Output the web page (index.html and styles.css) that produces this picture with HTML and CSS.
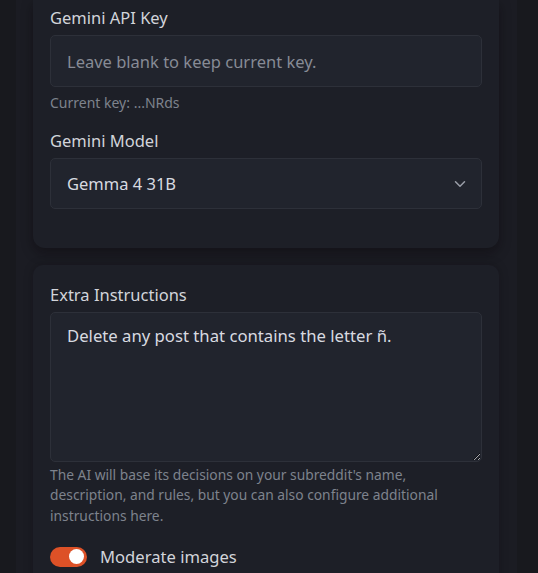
FILE: index.html
```html
<!DOCTYPE html>
<html lang="en">
<head>
<meta charset="utf-8">
<title>Settings</title>
<link rel="stylesheet" href="styles.css">
</head>
<body>
<div class="panel">
  <section class="card card-top">
    <div class="field">
      <label class="label" for="key">Gemini API Key</label>
      <input class="control" id="key" type="password" placeholder="Leave blank to keep current key.">
      <p class="hint hint-key">Current key: ...NRds</p>
    </div>
    <div class="field">
      <label class="label" for="model">Gemini Model</label>
      <div class="select-wrap">
        <select class="control select" id="model">
          <option>Gemma 4 31B</option>
        </select>
        <svg class="chevron" width="12" height="8" viewBox="0 0 12 8" aria-hidden="true"><path d="M1.5 1.75 6 6.25l4.5-4.5" fill="none" stroke="currentColor" stroke-width="1.5" stroke-linecap="round" stroke-linejoin="round"/></svg>
      </div>
    </div>
  </section>
  <section class="card card-second">
    <div class="field">
      <label class="label" for="extra">Extra Instructions</label>
      <textarea class="control textarea" id="extra">Delete any post that contains the letter ñ.</textarea>
      <p class="hint hint-long">The AI will base its decisions on your subreddit's name, description, and rules, but you can also configure additional instructions here.</p>
    </div>
    <label class="toggle-row">
      <span class="toggle"><span class="knob"></span></span>
      <span class="toggle-label">Moderate images</span>
    </label>
  </section>
</div>
</body>
</html>
```

FILE: styles.css
```css
* { box-sizing: border-box; }
html, body { height: 100%; }
body {
  margin: 0;
  background: #18191e;
  font-family: "Noto Sans", "Open Sans", sans-serif;
  color: #d4d6dc;
  overflow: hidden;
  color-scheme: dark;
}
.panel {
  margin-left: 16px;
  width: 501px;
  min-height: 100%;
  background: #1b1c23;
  padding: 0 18px 0 17px;
}
.card {
  background: #1d1f27;
  padding: 0 17px;
  box-shadow: 0 5px 12px rgba(10, 6, 10, 0.4);
}
.card-top {
  padding-top: 6px;
  padding-bottom: 39px;
  border-radius: 0 0 12px 12px;
}
.card-second {
  margin-top: 17px;
  padding-top: 17.5px;
  padding-bottom: 20px;
  border-radius: 10px 10px 0 0;
  box-shadow: 0 0 10px rgba(10, 6, 10, 0.25);
}
.field { display: flex; flex-direction: column; }
.field + .field { margin-top: 15.5px; }
.label {
  font-size: 16.5px;
  line-height: 24px;
  color: #d2d4da;
  margin-bottom: 5px;
}
.control {
  width: 100%;
  margin: 0;
  font-family: inherit;
  font-size: 16.5px;
  color: #d8dae0;
  background: #21242d;
  border: 1px solid #2d3039;
  border-radius: 5px;
  outline: none;
}
input.control {
  height: 52px;
  padding: 0 16px;
}
.control::placeholder { color: #878b95; opacity: 1; }
.select-wrap { position: relative; }
.select {
  appearance: none;
  -webkit-appearance: none;
  height: 51px;
  padding: 0 40px 0 16px;
}
.chevron {
  position: absolute;
  right: 16px;
  top: 22px;
  color: #9a9ea8;
}
.textarea {
  display: block;
  height: 150px;
  padding: 10px 16px;
  font-size: 16.7px;
  line-height: 26px;
  resize: vertical;
}
.hint {
  margin: 6px 0 0;
  font-size: 13.8px;
  line-height: 20.5px;
  color: #7e838d;
}
.hint-key { font-size: 14px; margin-top: 6px; }
.hint-long { margin-top: 3px; }
.toggle-row {
  display: flex;
  align-items: center;
  gap: 13px;
  margin-top: 19px;
}
.toggle {
  width: 37px;
  height: 20px;
  border-radius: 10px;
  background: #dd5127;
  display: flex;
  align-items: center;
  justify-content: flex-end;
  padding: 0 3px;
}
.knob {
  width: 15px;
  height: 15px;
  border-radius: 50%;
  background: #ffffff;
}
.toggle-label {
  font-size: 16.6px;
  color: #d2d4da;
}
```
